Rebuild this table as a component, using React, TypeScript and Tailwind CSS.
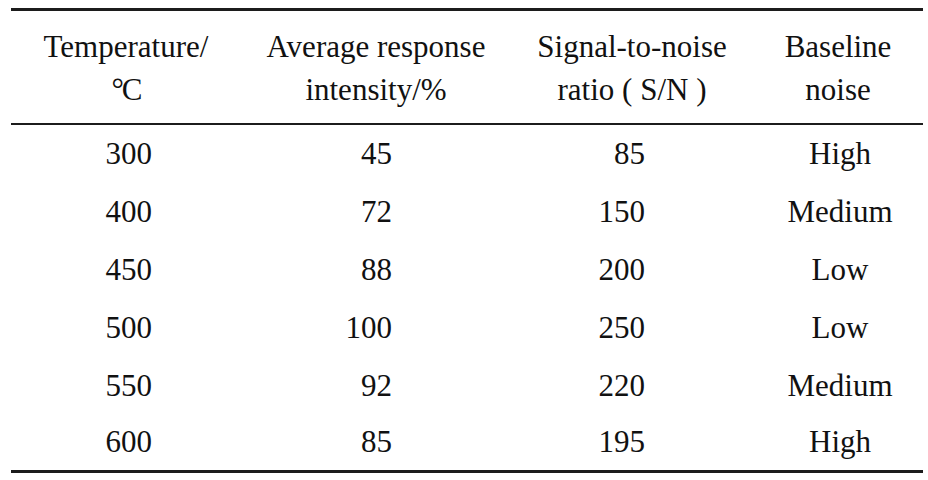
import React from "react";

const rows = [
  ["300", "45", "85", "High"],
  ["400", "72", "150", "Medium"],
  ["450", "88", "200", "Low"],
  ["500", "100", "250", "Low"],
  ["550", "92", "220", "Medium"],
  ["600", "85", "195", "High"],
];

function Row({ r, last }: { r: string[]; last: boolean }) {
  return (
    <div className={last ? "grid grid-cols-[230px_270px_242px_170px] items-center h-[55px]" : "grid grid-cols-[230px_270px_242px_170px] items-center h-[58px]"}>
      <div className="font-['Liberation_Serif'] text-[31px] text-right pr-[89px]">{r[0]}</div>
      <div className="font-['Liberation_Serif'] text-[31px] text-right pr-[119px]">{r[1]}</div>
      <div className="font-['Liberation_Serif'] text-[31px] text-right pr-[108px]">{r[2]}</div>
      <div className="font-['Liberation_Serif'] text-[31px] text-center pl-[4px]">{r[3]}</div>
    </div>
  );
}

export default function App() {
  return (
    <div className="w-[928px] h-[480px] bg-white text-[#111] pt-[8px] px-[11px] font-['Liberation_Serif']">
      <div className="w-[912px] border-t-[3px] border-b-[3px] border-[#1c1c1c] font-['Liberation_Serif']">
        <div className="grid grid-cols-[230px_270px_242px_170px] h-[114px] border-b-2 border-[#1c1c1c] items-center text-center">
          <div className="font-['Liberation_Serif'] text-[31px] leading-[43px] pt-[1px]">
            <div className="font-['Liberation_Serif']">Temperature/</div>
            <div className="font-['Liberation_Serif'] tracking-[-2px]">°C</div>
          </div>
          <div className="font-['Liberation_Serif'] text-[31px] leading-[43px] pt-[1px]">
            <div className="font-['Liberation_Serif']">Average response</div>
            <div className="font-['Liberation_Serif']">intensity/%</div>
          </div>
          <div className="font-['Liberation_Serif'] text-[31px] leading-[43px] pt-[1px]">
            <div className="font-['Liberation_Serif']">Signal-to-noise</div>
            <div className="font-['Liberation_Serif']">ratio ( S/N )</div>
          </div>
          <div className="font-['Liberation_Serif'] text-[31px] leading-[43px] pt-[1px]">
            <div className="font-['Liberation_Serif']">Baseline</div>
            <div className="font-['Liberation_Serif']">noise</div>
          </div>
        </div>
        <div className="flex flex-col">
          {rows.map((r, i) => (
            <Row key={i} r={r} last={i === rows.length - 1} />
          ))}
        </div>
      </div>
    </div>
  );
}
